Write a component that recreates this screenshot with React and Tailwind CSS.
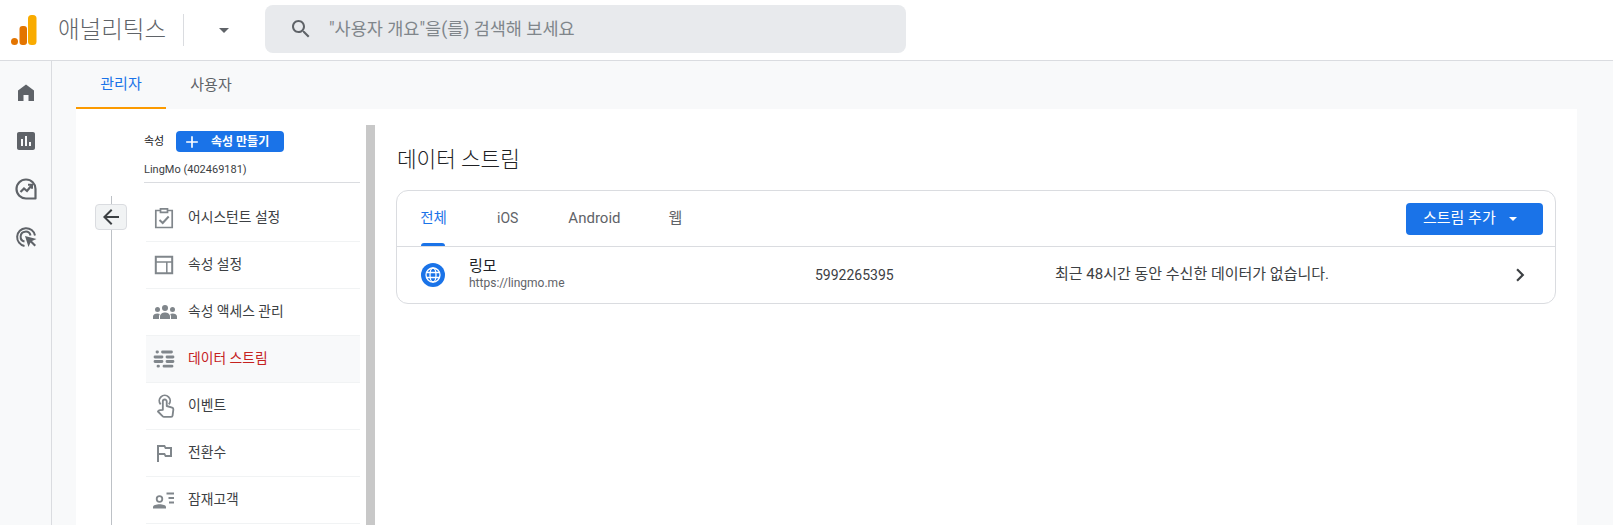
const FONT = "font-['Roboto','Noto_Sans_CJK_KR',sans-serif]"

const Icon = ({ d, size = 24, className = '', fill = 'currentColor' }) => (
  <svg width={size} height={size} viewBox="0 0 24 24" className={className} fill={fill}>
    <path d={d} />
  </svg>
)

const Logo = () => (
  <svg width="26" height="30" viewBox="0 0 26 30" className="block">
    <rect x="17" y="0" width="8.500" height="30" rx="3.500" fill="#f9ab00" />
    <rect x="8.500" y="11" width="7.500" height="19" rx="3" fill="#e37400" />
    <circle cx="3.500" cy="26.500" r="3.500" fill="#e37400" />
  </svg>
)

const InsightsIcon = () => (
  <svg width="24" height="24" viewBox="0 0 24 24" fill="none" stroke="currentColor" strokeWidth="2.200">
    <path d="M21.500 21.500H12A9.500 9.500 0 1 1 21.500 12z" strokeLinejoin="round" />
    <path d="M6.500 15l3.500-3.500 3 2.500 4.500-5.500" />
    <path d="M14 7.800h4v4" strokeWidth="2" />
  </svg>
)

const AdsClickIcon = () => (
  <svg width="24" height="24" viewBox="0 0 24 24" fill="none" stroke="currentColor" strokeWidth="2">
    <path d="M10.500 21A9 9 0 1 1 21 10.500" />
    <path d="M10.500 16.500A5 5 0 1 1 16.500 10.500" />
    <path d="M11 11l3.500 11 2-4.500 4 4 1.500-1.500-4-4 4.500-2z" fill="currentColor" stroke="none" />
  </svg>
)

const AssistantIcon = () => (
  <svg width="24" height="24" viewBox="0 0 24 24" fill="none" stroke="#80868b" strokeWidth="1.700">
    <path d="M8 4.500H3.800v17h16.400v-17H16" />
    <path d="M8.500 2.800h7v3.600h-7z" fill="#fff" />
    <path d="M7.500 14l3.200 3 6-6.500" strokeWidth="2" />
  </svg>
)

const LayoutIcon = () => (
  <svg width="24" height="24" viewBox="0 0 24 24" fill="none" stroke="#80868b" strokeWidth="1.700">
    <path d="M3.800 3.800h16.400v16.400H3.800z" strokeWidth="2" />
    <path d="M3.800 9h16.400M14.800 9v11.200" strokeWidth="1.500" />
  </svg>
)

const GroupIcon = () => (
  <svg width="26" height="24" viewBox="0 0 26 24" fill="#80868b">
    <circle cx="13" cy="8" r="3" />
    <circle cx="5.500" cy="9.500" r="2.500" />
    <circle cx="20.500" cy="9.500" r="2.500" />
    <path d="M1 19v-2.500C1 14.500 3 13.500 5.500 13.500c1 0 1.800.2 2.300.5-.5.700-.8 1.500-.8 2.500V19z" />
    <path d="M25 19v-2.500c0-2-2-3-4.500-3-1 0-1.800.2-2.300.5.500.700.800 1.500.800 2.500V19z" />
    <path d="M8 19v-2.500C8 14 10.500 12.500 13 12.500s5 1.500 5 4V19z" />
  </svg>
)

const StreamsIcon = () => (
  <svg width="24" height="24" viewBox="0 0 24 24" fill="none" stroke="#80868b" strokeWidth="2.800" strokeLinecap="round">
    <path d="M5 5h.5M10.500 5h9M3 10h7M15 10h6M3 14.500h7M15 14.500h6M6 19.200h.5M12 19.200h8" />
  </svg>
)

const TouchIcon = () => (
  <svg width="26" height="26" viewBox="0 0 24 24" fill="none" stroke="#80868b" strokeWidth="1.700" strokeLinejoin="round">
    <path d="M8 10.500a5 5 0 1 1 7.500 0" />
    <path d="M10 15.500V7.800a1.800 1.800 0 0 1 3.600 0V12l5 1.600c.8.300 1.200 1 1.100 1.800l-.7 5.400c-.1.700-.6 1.200-1.300 1.200h-6.700c-.4 0-.8-.2-1.100-.5l-4.400-4.400 1-1c.3-.3.7-.4 1.100-.3z" />
  </svg>
)

const AudienceIcon = () => (
  <svg width="24" height="24" viewBox="0 0 24 24" fill="none" stroke="#80868b" strokeWidth="1.800">
    <circle cx="7.500" cy="11" r="2.800" />
    <path d="M1 20.500v-1.500c0-1.800 3.400-2.800 6.500-2.800S14 17.200 14 19v1.500z" fill="#80868b" stroke="none" />
    <path d="M14.500 5.500h7.500M16.500 10h5.500M17 14.500h5" strokeWidth="2" />
  </svg>
)

const GlobeIcon = () => (
  <svg width="24" height="24" viewBox="0 0 24 24" fill="none">
    <circle cx="12" cy="12" r="12" fill="#1a73e8" />
    <g stroke="#fff" strokeWidth="1.300">
      <circle cx="12" cy="12" r="7" />
      <ellipse cx="12" cy="12" rx="3" ry="7" />
      <path d="M5.500 9.500h13M5.500 14.500h13" />
    </g>
  </svg>
)

const NAV = [
  { label: '어시스턴트 설정', icon: <AssistantIcon /> },
  { label: '속성 설정', icon: <LayoutIcon /> },
  { label: '속성 액세스 관리', icon: <GroupIcon /> },
  { label: '데이터 스트림', icon: <StreamsIcon />, active: true },
  { label: '이벤트', icon: <TouchIcon /> },
  { label: '전환수', icon: <Icon size={24} className="text-[#80868b]" d="M14 6l-1-2H5v17h2v-7h5l1 2h7V6h-6zm4 8h-4l-1-2H7V6h5l1 2h5v6z" /> },
  { label: '잠재고객', icon: <AudienceIcon /> },
]

export default function App() {
  return (
    <div className={`h-screen overflow-hidden flex flex-col bg-white text-[#3c4043] ${FONT}`}>
      {/* Header */}
      <header className="h-[61px] shrink-0 flex items-center border-b border-[#dadce0] bg-white">
        <div className="ml-[11px] w-[27px]"><Logo /></div>
        <span className="ml-[20px] w-[110px] text-[23.500px] leading-[28px] font-light text-[#5f6368] whitespace-nowrap">애널리틱스</span>
        <div className="ml-[15px] w-px h-[32px] bg-[#dadce0]" />
        <div className="ml-[35px] w-0 h-0 border-x-[5px] border-x-transparent border-t-[5px] border-t-[#5f6368]" />
        <div className="ml-[36px] mb-[2px] w-[641px] h-[48px] rounded-lg bg-[#e8eaed] flex items-center">
          <Icon className="ml-[24px] text-[#5f6368]" d="M15.500 14h-.79l-.28-.27C15.410 12.590 16 11.110 16 9.500 16 5.910 13.090 3 9.500 3S3 5.910 3 9.500 5.910 16 9.500 16c1.610 0 3.090-.59 4.230-1.570l.27.28v.79l5 4.990L20.490 19l-4.990-5zm-6 0C7.010 14 5 11.990 5 9.500S7.010 5 9.500 5 14 7.010 14 9.500 11.990 14 9.500 14z" />
          <span className="ml-[16px] text-[17.500px] text-[#80868b] whitespace-nowrap">"사용자 개요"을(를) 검색해 보세요</span>
        </div>
      </header>

      <div className="flex-1 min-h-0 flex">
        {/* Sidebar */}
        <aside className="w-[52px] shrink-0 border-r border-[#dadce0] bg-[#f8f9fa] pt-[20px] flex flex-col items-center gap-[24px] text-[#5f6368]">
          <Icon d="M12 3.500L4 9.500V20h5.500v-6h5v6H20V9.500z" />
          <Icon d="M19 3H5c-1.100 0-2 .9-2 2v14c0 1.100.9 2 2 2h14c1.100 0 2-.9 2-2V5c0-1.100-.9-2-2-2zM9 17H7v-7h2v7zm4 0h-2V7h2v10zm4 0h-2v-4h2v4z" />
          <InsightsIcon />
          <AdsClickIcon />
        </aside>

        <main className="flex-1 min-w-0 flex flex-col bg-[#f8f9fa] pl-[24px] pr-[36px]">
          {/* Tabs */}
          <div className="h-[48px] shrink-0 flex text-[15px]">
            <div className="w-[90px] flex items-center justify-center text-[#1a73e8] border-b-2 border-[#fb9a00]">관리자</div>
            <div className="w-[90px] flex items-center justify-center text-[#5f6368]">사용자</div>
          </div>

          <div className="flex-1 min-h-0 flex bg-white">
            {/* Back rail */}
            <div className="w-[68px] shrink-0 pt-[87px] flex flex-col">
              <div className="ml-[35px] w-px h-[8px] bg-[#bdc1c6]" />
              <button className="ml-[19px] w-[32px] h-[26px] flex items-center justify-center rounded-sm border border-[#dadce0] bg-[#f1f3f4] text-[#3c4043]">
                <Icon size={24} d="M20 11H7.830l5.590-5.590L12 4l-8 8 8 8 1.410-1.410L7.830 13H20v-2z" />
              </button>
              <div className="ml-[35px] w-px flex-1 bg-[#bdc1c6]" />
            </div>

            {/* Property column */}
            <div className="w-[216px] shrink-0 pt-[22px]">
              <div className="flex items-center h-[21px] text-[11px] text-[#202124]">
                <span className="w-[32px] mt-[1px]">속성</span>
                <button className="w-[108px] h-[21px] flex items-center rounded-[4px] bg-[#1a73e8] text-white font-bold">
                  <Icon size={20} className="ml-[6px]" d="M19 13h-6v6h-2v-6H5v-2h6V5h2v6h6v2z" />
                  <span className="ml-[9px] text-[12px] whitespace-nowrap">속성 만들기</span>
                </button>
              </div>
              <div className="h-[31px] pt-[10px] leading-[16px] text-[11px] text-[#3c4043] border-b border-[#dadce0]">LingMo (402469181)</div>
              <nav className="mt-[12px] ml-[2px]">
                {NAV.map(item => (
                  <div key={item.label} className={`h-[47px] flex items-center border-b border-[#f1f3f4] ${item.active ? 'bg-[#f8f9fa]' : ''}`}>
                    <div className="w-[42px] pl-[6px] shrink-0 flex">{item.icon}</div>
                    <span className={`mb-[2px] text-[13.800px] whitespace-nowrap ${item.active ? 'text-[#c5221f]' : 'text-[#3c4043]'}`}>{item.label}</span>
                  </div>
                ))}
              </nav>
            </div>

            {/* Scrollbar */}
            <div className="ml-[6px] mt-[16px] w-[9px] shrink-0 bg-[#c8c8c8]" />

            {/* Streams */}
            <div className="ml-[21px] w-[1160px] shrink-0 pt-[37px]">
              <h1 className="ml-[1px] text-[21.300px] leading-[28px] font-light text-[#202124]">데이터 스트림</h1>
              <div className="mt-[16px] rounded-xl border border-[#dadce0] bg-white">
                <div className="h-[56px] flex items-center border-b border-[#dadce0] text-[15px] text-[#5f6368]">
                  <div className="relative w-[24px] ml-[24px] h-full flex items-center justify-center text-[#1a73e8] whitespace-nowrap">
                    <span className="ml-[1px] text-[14.500px]">전체</span>
                    <div className="absolute bottom-0 left-0 right-0 h-[3px] rounded-t bg-[#1a73e8]" />
                  </div>
                  <span className="ml-[52px] text-[14px]">iOS</span>
                  <span className="ml-[50px] text-[15px]">Android</span>
                  <span className="ml-[48px]">웹</span>
                  <button className="ml-auto mr-[12px] w-[137px] h-[32px] flex items-center rounded-[4px] bg-[#1a73e8] text-white text-[15px]">
                    <span className="ml-[17px] whitespace-nowrap">스트림 추가</span>
                    <span className="ml-[13px] w-0 h-0 border-x-[4px] border-x-transparent border-t-[4px] border-t-white" />
                  </button>
                </div>
                <div className="h-[56px] flex items-center">
                  <div className="ml-[24px] w-[48px] shrink-0"><GlobeIcon /></div>
                  <div className="w-[346px] shrink-0 mb-[2px]">
                    <div className="text-[15px] leading-[18px] text-[#202124]">링모</div>
                    <div className="text-[12px] leading-[16px] text-[#5f6368]">https://lingmo.me</div>
                  </div>
                  <span className="w-[240px] shrink-0 text-[14px] text-[#3c4043]">5992265395</span>
                  <span className="mb-[2px] text-[15px] text-[#3c4043] whitespace-nowrap">최근 48시간 동안 수신한 데이터가 없습니다.</span>
                  <Icon size={26} className="ml-auto mr-[22px] text-[#3c4043]" d="M10 6L8.590 7.410 13.170 12l-4.580 4.590L10 18l6-6z" />
                </div>
              </div>
            </div>
          </div>
        </main>
      </div>
    </div>
  )
}
